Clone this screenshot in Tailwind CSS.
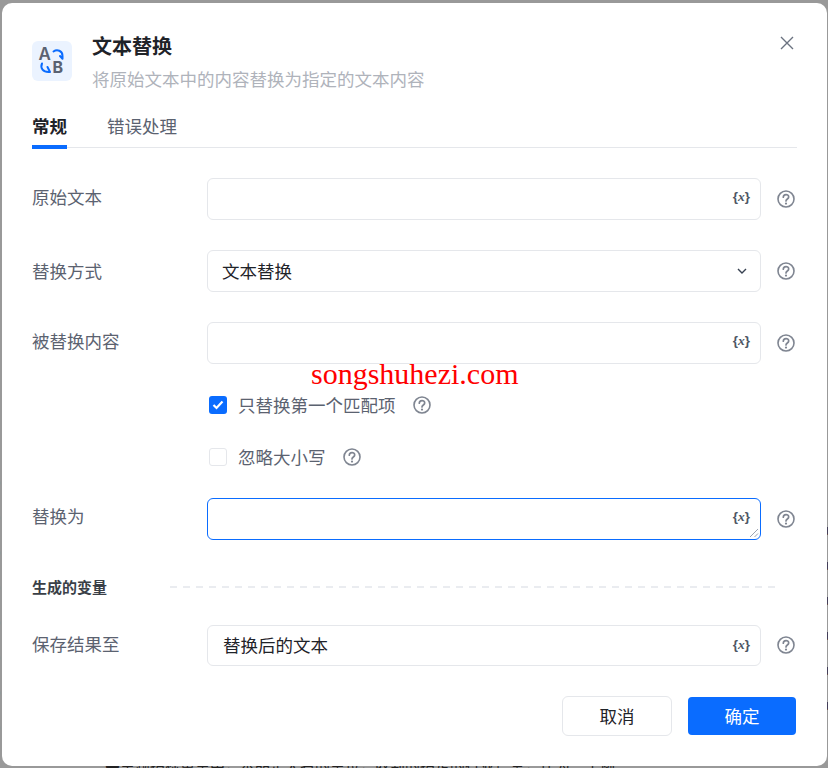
<!DOCTYPE html>
<html lang="zh-CN">
<head>
    <meta charset="UTF-8">
    <title>文本替换</title>
    <script src="https://cdn.jsdelivr.net/npm/@tailwindcss/browser@4"></script>
</head>
<body>
    <div class="relative w-[828px] h-[768px] overflow-hidden bg-[#999999] font-['Noto_Sans_CJK_SC','Noto_Sans',sans-serif]">
        <!-- page text behind the dialog, only slivers of it show -->
        <div class="absolute left-[105px] top-[755px] text-[15px] leading-[20px] text-[#222222] whitespace-nowrap">●主题指标重生中，本品是大名的单位，收到的指定的行业信息，作为一个例</div>
        <div class="absolute left-[-7px] top-[465px] flex flex-col text-[13px] leading-[35px] text-[#222222]">
            <span>0</span><span>0</span><span>0</span><span>0</span><span>0</span><span>0</span><span>0</span><span>0</span>
        </div>
        <div class="absolute left-[826px] top-[513px] flex flex-col text-[10px] leading-[35px] text-[#222222]">
            <span>l</span><span>l</span><span>l</span><span>l</span><span>l</span><span>l</span>
        </div>

        <div class="absolute left-[2px] top-[3px] w-[825px] h-[763px] bg-white rounded-[10px] pt-[28px] px-[30px]">
            <!-- header -->
            <div class="relative flex w-[765px]">
                <div class="mt-[10px] w-[40px] h-[40px] rounded-[6px] bg-[#ebf3ff]">
                    <svg width="40" height="40" viewBox="0 0 40 40" fill="none">
                        <text x="6.5" y="19" font-family="Inter, sans-serif" font-size="17" font-weight="600" fill="#5a6272">A</text>
                        <text x="20.5" y="32" font-family="Inter, sans-serif" font-size="16" font-weight="700" fill="#5a6272">B</text>
                        <path d="M21.5 10.5 C25 8 30.5 9.5 30.5 15 L30.5 17.5 M28 15 L30.5 17.8" stroke="#0a6cff" stroke-width="2" stroke-linecap="round" stroke-linejoin="round"/>
                        <path d="M10 22.5 C8 27 11 31.5 17.5 31 M15.5 26 L18 31" stroke="#0a6cff" stroke-width="2" stroke-linecap="round" stroke-linejoin="round"/>
                    </svg>
                </div>
                <div class="ml-[20px]">
                    <div class="text-[20px] leading-[32px] font-bold text-[#1f2329] -mt-[1px]">文本替换</div>
                    <div class="text-[17.5px] leading-[34px] text-[#afb3bb]">将原始文本中的内容替换为指定的文本内容</div>
                </div>
                <svg class="absolute right-[2px] top-[4px]" width="16" height="16" viewBox="0 0 16 16" fill="none">
                    <path d="M2 2 L14 14 M14 2 L2 14" stroke="#6b7280" stroke-width="1.4"/>
                </svg>
            </div>

            <!-- tabs -->
            <div class="mt-[15px] h-[37px] w-[765px] flex gap-[40px] border-b border-[#e5e7eb] text-[17.5px] leading-[26px] pt-[2px]">
                <div class="h-[36px] border-b-[4px] border-[#0a6cff] font-bold text-[#1f2329]">常规</div>
                <div class="text-[#5b6270]">错误处理</div>
            </div>

            <!-- original text -->
            <div class="mt-[30px] flex items-start">
                <div class="w-[175px] h-[42px] text-[17.5px] leading-[38px] text-[#5b6270]">原始文本</div>
                <div class="w-[554px] h-[42px] rounded-[6px] border border-[#e5e7eb] flex items-center justify-end pr-[10px]">
                    <span class="font-['Liberation_Sans',sans-serif] font-bold text-[13.5px] text-[#4e5664] -mt-[4px]">{<i class="font-['Liberation_Serif',serif]">x</i>}</span>
                </div>
                <svg class="ml-[16px] mt-[12px]" width="18" height="18" viewBox="0 0 18 18" fill="none">
                    <circle cx="9" cy="9" r="8" stroke="#7f8591" stroke-width="1.6"/>
                    <path d="M6.3 7.2 C6.3 3.8 11.7 3.8 11.7 7 C11.7 9 9 9 9 11" stroke="#7f8591" stroke-width="1.7" stroke-linecap="round"/>
                    <circle cx="9" cy="13.6" r="1.1" fill="#7f8591"/>
                </svg>
            </div>

            <!-- replace mode -->
            <div class="mt-[30px] flex items-start">
                <div class="w-[175px] h-[42px] text-[17.5px] leading-[41px] text-[#5b6270]">替换方式</div>
                <div class="w-[554px] h-[42px] rounded-[6px] border border-[#e5e7eb] flex items-center justify-between pl-[14px] pr-[13px]">
                    <span class="text-[17.5px] text-[#1f2329]">文本替换</span>
                    <svg width="10" height="6" viewBox="0 0 10 6" fill="none">
                        <path d="M1 1 L5 5 L9 1" stroke="#374151" stroke-width="1.4"/>
                    </svg>
                </div>
                <svg class="ml-[16px] mt-[12px]" width="18" height="18" viewBox="0 0 18 18" fill="none">
                    <circle cx="9" cy="9" r="8" stroke="#7f8591" stroke-width="1.6"/>
                    <path d="M6.3 7.2 C6.3 3.8 11.7 3.8 11.7 7 C11.7 9 9 9 9 11" stroke="#7f8591" stroke-width="1.7" stroke-linecap="round"/>
                    <circle cx="9" cy="13.6" r="1.1" fill="#7f8591"/>
                </svg>
            </div>

            <!-- replaced content -->
            <div class="mt-[30px] flex items-start">
                <div class="w-[175px] h-[42px] text-[17.5px] leading-[38px] text-[#5b6270]">被替换内容</div>
                <div class="w-[554px] h-[42px] rounded-[6px] border border-[#e5e7eb] flex items-center justify-end pr-[10px]">
                    <span class="font-['Liberation_Sans',sans-serif] font-bold text-[13.5px] text-[#4e5664] -mt-[4px]">{<i class="font-['Liberation_Serif',serif]">x</i>}</span>
                </div>
                <svg class="ml-[16px] mt-[12px]" width="18" height="18" viewBox="0 0 18 18" fill="none">
                    <circle cx="9" cy="9" r="8" stroke="#7f8591" stroke-width="1.6"/>
                    <path d="M6.3 7.2 C6.3 3.8 11.7 3.8 11.7 7 C11.7 9 9 9 9 11" stroke="#7f8591" stroke-width="1.7" stroke-linecap="round"/>
                    <circle cx="9" cy="13.6" r="1.1" fill="#7f8591"/>
                </svg>
            </div>

            <!-- checkboxes -->
            <div class="mt-[32px] ml-[177px] flex items-center h-[18px]">
                <div class="w-[18px] h-[18px] rounded-[3px] bg-[#0a6cff] flex items-center justify-center">
                    <svg width="12" height="10" viewBox="0 0 12 10" fill="none">
                        <path d="M1.5 5 L4.5 8 L10.5 1.5" stroke="white" stroke-width="2.2"/>
                    </svg>
                </div>
                <span class="ml-[11px] text-[17.5px] text-[#5b6270]">只替换第一个匹配项</span>
                <svg class="ml-[17px]" width="18" height="18" viewBox="0 0 18 18" fill="none">
                    <circle cx="9" cy="9" r="8" stroke="#7f8591" stroke-width="1.6"/>
                    <path d="M6.3 7.2 C6.3 3.8 11.7 3.8 11.7 7 C11.7 9 9 9 9 11" stroke="#7f8591" stroke-width="1.7" stroke-linecap="round"/>
                    <circle cx="9" cy="13.6" r="1.1" fill="#7f8591"/>
                </svg>
            </div>
            <div class="mt-[34px] ml-[177px] flex items-center h-[18px]">
                <div class="w-[18px] h-[18px] rounded-[3px] border border-[#e5e7eb]"></div>
                <span class="ml-[11px] text-[17.5px] text-[#5b6270]">忽略大小写</span>
                <svg class="ml-[17px]" width="18" height="18" viewBox="0 0 18 18" fill="none">
                    <circle cx="9" cy="9" r="8" stroke="#7f8591" stroke-width="1.6"/>
                    <path d="M6.3 7.2 C6.3 3.8 11.7 3.8 11.7 7 C11.7 9 9 9 9 11" stroke="#7f8591" stroke-width="1.7" stroke-linecap="round"/>
                    <circle cx="9" cy="13.6" r="1.1" fill="#7f8591"/>
                </svg>
            </div>

            <!-- replace with -->
            <div class="mt-[32px] flex items-start">
                <div class="w-[175px] h-[42px] text-[17.5px] leading-[36px] text-[#5b6270]">替换为</div>
                <div class="relative w-[554px] h-[42px] rounded-[6px] border border-[#0a6cff] flex items-center justify-end pr-[10px]">
                    <span class="font-['Liberation_Sans',sans-serif] font-bold text-[13.5px] text-[#4e5664] -mt-[4px]">{<i class="font-['Liberation_Serif',serif]">x</i>}</span>
                    <svg class="absolute right-[1px] bottom-[1px]" width="10" height="10" viewBox="0 0 10 10" fill="none">
                        <path d="M1 9 L9 1 M5.5 9 L9 5.5" stroke="#9ca3af" stroke-width="1"/>
                    </svg>
                </div>
                <svg class="ml-[16px] mt-[12px]" width="18" height="18" viewBox="0 0 18 18" fill="none">
                    <circle cx="9" cy="9" r="8" stroke="#7f8591" stroke-width="1.6"/>
                    <path d="M6.3 7.2 C6.3 3.8 11.7 3.8 11.7 7 C11.7 9 9 9 9 11" stroke="#7f8591" stroke-width="1.7" stroke-linecap="round"/>
                    <circle cx="9" cy="13.6" r="1.1" fill="#7f8591"/>
                </svg>
            </div>

            <!-- output variable -->
            <div class="mt-[36px] flex items-center h-[24px]">
                <div class="text-[15px] leading-[22px] -mt-[2px] font-bold text-[#3a3f47] w-[138px]">生成的变量</div>
                <div class="w-[606px] h-[2px] -mt-[3px] bg-[repeating-linear-gradient(90deg,#eaecf0_0,#eaecf0_7px,transparent_7px,transparent_13px)]"></div>
            </div>
            <div class="mt-[25px] flex items-start">
                <div class="w-[175px] h-[41px] text-[17.5px] leading-[37px] text-[#5b6270]">保存结果至</div>
                <div class="w-[554px] h-[41px] rounded-[6px] border border-[#e5e7eb] flex items-center justify-between pl-[15px] pr-[10px]">
                    <span class="text-[17.5px] text-[#1f2329]">替换后的文本</span>
                    <span class="font-['Liberation_Sans',sans-serif] font-bold text-[13.5px] text-[#4e5664]">{<i class="font-['Liberation_Serif',serif]">x</i>}</span>
                </div>
                <svg class="ml-[16px] mt-[11px]" width="18" height="18" viewBox="0 0 18 18" fill="none">
                    <circle cx="9" cy="9" r="8" stroke="#7f8591" stroke-width="1.6"/>
                    <path d="M6.3 7.2 C6.3 3.8 11.7 3.8 11.7 7 C11.7 9 9 9 9 11" stroke="#7f8591" stroke-width="1.7" stroke-linecap="round"/>
                    <circle cx="9" cy="13.6" r="1.1" fill="#7f8591"/>
                </svg>
            </div>

            <!-- footer -->
            <div class="mt-[30px] flex justify-end items-center gap-[16px] w-[764px]">
                <button class="w-[110px] h-[40px] rounded-[6px] border border-[#e5e7eb] bg-white text-[17.5px] text-[#1f2329]">取消</button>
                <button class="w-[108px] h-[38px] rounded-[4px] bg-[#0a6cff] text-[17.5px] text-white">确定</button>
            </div>
        </div>

        <!-- watermark -->
        <div class="absolute left-[311px] top-[356px] font-['Liberation_Serif',serif] text-[30px] leading-[36px] text-[#ff0000] whitespace-nowrap">songshuhezi.com</div>
    </div>
</body>
</html>
